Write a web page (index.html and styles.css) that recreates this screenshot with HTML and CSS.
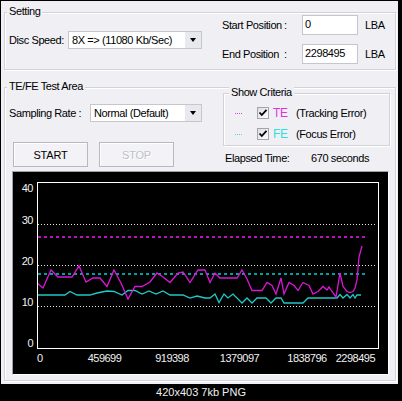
FILE: index.html
```html
<!DOCTYPE html>
<html lang="en">
<head>
    <meta charset="UTF-8">
    <meta name="viewport" content="width=device-width, initial-scale=1.0">
    <title>TE/FE Test</title>
    <link rel="stylesheet" href="styles.css">
</head>
<body>
    <div class="window">
        <div class="group setting">
            <div class="group-title">Setting</div>
            <div class="setting-body">
                <div class="speed">
                    <span class="field-label">Disc Speed:</span>
                    <div class="combo combo-speed">
                        <span class="combo-text">8X =&gt; (11080 Kb/Sec)</span>
                        <span class="combo-button"></span>
                    </div>
                </div>
                <div class="positions">
                    <span>Start Position</span><span>:</span><div class="edit">0</div><span class="unit">LBA</span>
                    <span>End Position</span><span>:</span><div class="edit">2298495</div><span class="unit">LBA</span>
                </div>
            </div>
        </div>

        <div class="group test-area">
            <div class="group-title">TE/FE Test Area</div>
            <div class="test-top">
                <div class="test-left">
                    <div class="sampling">
                        <span class="sampling-label">Sampling Rate :</span>
                        <div class="combo combo-rate">
                            <span class="combo-text">Normal (Default)</span>
                            <span class="combo-button"></span>
                        </div>
                    </div>
                    <div class="buttons">
                        <button class="btn" type="button">START</button>
                        <button class="btn" type="button" disabled>STOP</button>
                    </div>
                </div>
                <div class="test-right">
                    <div class="group criteria">
                        <div class="group-title">Show Criteria</div>
                        <div class="crit-row">
                            <span class="dots dots-te"></span>
                            <span class="check"><svg width="10" height="10" viewBox="0 0 10 10"><path d="M1.5 4.5 L3.8 7 L8.5 1.8" fill="none" stroke="#000" stroke-width="1.8"/></svg></span>
                            <span class="code code-te">TE</span>
                            <span>(Tracking Error)</span>
                        </div>
                        <div class="crit-row row-fe">
                            <span class="dots dots-fe"></span>
                            <span class="check"><svg width="10" height="10" viewBox="0 0 10 10"><path d="M1.5 4.5 L3.8 7 L8.5 1.8" fill="none" stroke="#000" stroke-width="1.8"/></svg></span>
                            <span class="code code-fe">FE</span>
                            <span>(Focus Error)</span>
                        </div>
                    </div>
                    <div class="elapsed">
                        <span class="elapsed-label">Elapsed Time:</span>
                        <span>670 seconds</span>
                    </div>
                </div>
            </div>

            <div class="chart">
                <svg width="375" height="202" viewBox="0 0 375 202">
                    <g class="grid">
                        <line x1="25" y1="52.5" x2="362" y2="52.5"/>
                        <line x1="25" y1="93.5" x2="362" y2="93.5"/>
                        <line x1="25" y1="134.5" x2="362" y2="134.5"/>
                    </g>
                    <line class="limit-te" x1="25" y1="65" x2="353" y2="65"/>
                    <line class="limit-fe" x1="25" y1="102" x2="353" y2="102"/>
                    <polyline class="line-fe" points="24,123 52,123 57,119.5 64,123 77,123 84,121 94,119 101,119.5 109,123 115,118.5 122,118.5 129,122 136,119 143,122 150,119 157,123 170,123 177,126 184,124 192,126 197,126 202,122 206,130.5 211,122 215,126 220,122 229,131 234,126 239,131 244,126 253,126 258,131 263,126 268,126 271,131 290,131 295,126 324,126 327,122.5 330,126 334,122.5 337,126 340,122.5 342,126 344,123 348,123"/>
                    <polyline class="line-te" points="24,111 30,116 38,98 45,105 59,105 66,94 73,110 80,106 87,106 94,114.5 101,98 108,111 115,127 122,114.5 129,114.5 137,110 144,101 150,105 157,110.5 165,101 170,100 177,110.5 185,98 192,98 197,110.5 202,101 207,106 224,106 229,98 234,107 239,118.5 249,118.5 254,110.5 259,113.5 263,122 268,106 271,122 276,110.5 281,113.5 285,118.5 290,110.5 296,113.5 300,122 305,119.5 310,114.5 314,118 316,115 319,119.5 323,125 327,101 330,114.5 334,119.5 337,120.5 340,119.5 342,116 344,108 346,85 349,74"/>
                    <rect class="frame" x="24.5" y="10.5" width="341" height="166"/>
                    <g class="labels">
                        <text x="20" y="20" text-anchor="end">40</text>
                        <text x="20" y="52" text-anchor="end">30</text>
                        <text x="20" y="93" text-anchor="end">20</text>
                        <text x="20" y="134" text-anchor="end">10</text>
                        <text x="20" y="175" text-anchor="end">0</text>
                        <text x="24" y="190">0</text>
                        <text x="91.5" y="190" text-anchor="middle">459699</text>
                        <text x="159" y="190" text-anchor="middle">919398</text>
                        <text x="226.5" y="190" text-anchor="middle">1379097</text>
                        <text x="294" y="190" text-anchor="middle">1838796</text>
                        <text x="362" y="190" text-anchor="end">2298495</text>
                    </g>
                </svg>
            </div>
        </div>
    </div>
    <div class="caption">420x403 7kb PNG</div>
</body>
</html>
```

FILE: styles.css
```css
body {
    margin: 0;
    width: 402px;
    height: 401px;
    background: #000;
    font-family: "Liberation Sans", Arial, sans-serif;
    font-size: 11px;
    letter-spacing: -0.4px;
    color: #000;
    overflow: hidden;
}
.window {
    box-sizing: border-box;
    width: 397px;
    height: 383px;
    margin: 1px 0 0 1px;
    padding-top: 11px;
    background: #efeff4;
    overflow: hidden;
}

/* etched group boxes */
.group {
    box-sizing: border-box;
    border: 1px solid #d2d2da;
    box-shadow: inset 1px 1px 0 #fff, 1px 1px 0 #fff;
}
.group-title {
    width: max-content;
    margin: -8px 0 0 -2px;
    padding: 0 2px;
    line-height: 13px;
    background: #efeff4;
}

.setting {
    width: 392px;
    margin-left: 3px;
    padding: 0 10px 5px 4px;
}
.setting-body {
    display: flex;
    align-items: center;
    margin-top: -3px;
}
.speed {
    display: flex;
    align-items: center;
}
.field-label {
    width: 59px;
}
.positions {
    margin-left: auto;
    display: grid;
    grid-template-columns: 62px 18px 56px 27px;
    row-gap: 9px;
    align-items: center;
}
.edit {
    box-sizing: border-box;
    height: 20px;
    padding: 1px 2px;
    line-height: 14px;
    border: 1px solid #c6c6ce;
    background: #fff;
}
.unit {
    padding-left: 7px;
}

.combo {
    box-sizing: border-box;
    display: flex;
    height: 18px;
    border: 1px solid #c6c6ce;
    background: #fff;
}
.combo-speed {
    width: 134px;
}
.combo-rate {
    width: 112px;
}
.combo-text {
    flex: 1;
    padding-left: 3px;
    line-height: 16px;
}
.combo-button {
    width: 16px;
    display: flex;
    align-items: center;
    justify-content: center;
    background: #e8e8ef;
}
.combo-button::after {
    content: '';
    border-left: 3.5px solid transparent;
    border-right: 3.5px solid transparent;
    border-top: 4px solid #000;
}

.test-area {
    width: 392px;
    margin: 17px 0 0 3px;
    padding: 0 5px 5px 4px;
}
.test-top {
    display: flex;
    align-items: flex-start;
}
.test-left {
    width: 193px;
}
.sampling {
    display: flex;
    align-items: center;
    margin-top: 11px;
}
.sampling-label {
    width: 81px;
}
.buttons {
    display: flex;
    gap: 11px;
    margin-top: 20px;
    padding-left: 4px;
}
.btn {
    box-sizing: border-box;
    width: 75px;
    height: 25px;
    padding: 0;
    border: 1px solid #b8b8c2;
    background: #f3f3f7;
    box-shadow: inset 1px 1px 0 #fff;
    font-family: inherit;
    font-size: 11px;
    letter-spacing: -0.2px;
    color: #000;
}
.btn:disabled {
    color: #c0c0c8;
    text-shadow: 1px 1px 0 #fff;
}
.test-right {
    width: 167px;
    margin-left: 21px;
}
.criteria {
    padding-bottom: 5px;
}
.criteria .group-title {
    margin-left: 5px;
}
.crit-row {
    display: flex;
    align-items: center;
    height: 13px;
    margin-top: 7px;
}
.row-fe {
    margin-top: 8px;
}
.dots {
    width: 7px;
    height: 1px;
    margin: 2px 15px 0 11px;
    background-size: 2px 1px;
    background-repeat: repeat-x;
}
.dots-te {
    background-image: linear-gradient(90deg, #e040e0 50%, transparent 50%);
}
.dots-fe {
    background-image: linear-gradient(90deg, #40e0e0 50%, transparent 50%);
}
.check {
    box-sizing: border-box;
    width: 12px;
    height: 12px;
    display: flex;
    align-items: center;
    justify-content: center;
    border: 1px solid #a4a4b0;
    background: linear-gradient(135deg, #dcdce4, #fff);
}
.code {
    width: 23px;
    margin-left: 4px;
    font-size: 12px;
}
.code-te {
    color: #e030e0;
}
.code-fe {
    color: #30e0e0;
}
.elapsed {
    display: flex;
    margin-top: 6px;
    padding-left: 2px;
    line-height: 13px;
}
.elapsed-label {
    width: 86px;
}

.chart {
    box-sizing: border-box;
    width: 377px;
    height: 204px;
    margin: 4px 0 0 3px;
    border: 1px solid;
    border-color: #a0a0a8 #fff #fff #a0a0a8;
    background: #000;
}
.chart svg {
    display: block;
}
.grid line {
    stroke: #e8e8e8;
    stroke-width: 1;
    stroke-dasharray: 1 2;
}
.limit-te {
    stroke: #c010c0;
    stroke-width: 2;
    stroke-dasharray: 3 3;
}
.limit-fe {
    stroke: #00a0a0;
    stroke-width: 2;
    stroke-dasharray: 3 3;
}
.line-te {
    fill: none;
    stroke: #d818d8;
    stroke-width: 1.3;
}
.line-fe {
    fill: none;
    stroke: #20c8c8;
    stroke-width: 1.3;
}
.frame {
    fill: none;
    stroke: #fff;
    stroke-width: 1;
}
.labels text {
    fill: #f0f0f0;
    font-size: 11px;
    letter-spacing: -0.5px;
}

.caption {
    height: 17px;
    line-height: 17px;
    text-align: center;
    color: #f0f0f0;
    font-size: 11px;
    letter-spacing: 0;
}
```
